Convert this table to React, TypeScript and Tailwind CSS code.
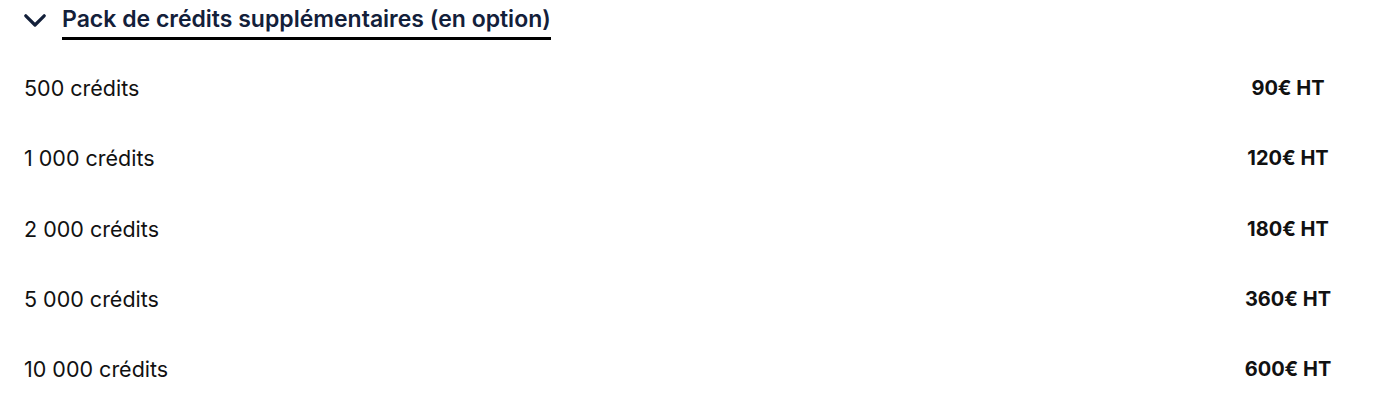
const packs = [
  { credits: "500 crédits", price: "90€ HT" },
  { credits: "1 000 crédits", price: "120€ HT" },
  { credits: "2 000 crédits", price: "180€ HT" },
  { credits: "5 000 crédits", price: "360€ HT" },
  { credits: "10 000 crédits", price: "600€ HT" },
];

export default function App() {
  return (
    <div className="h-[405px] w-[1380px] bg-white font-['Inter',sans-serif] text-[#111111]">
      <div className="flex h-[53px] items-start gap-4 pl-6 pt-[3px]">
        <svg width="22" height="13" viewBox="0 0 22 13" className="mt-[11px] text-[#13203a]">
          <path d="M1.8 1.8l9.2 9.2 9.2-9.2" fill="none" stroke="currentColor" strokeWidth="3.2" strokeLinecap="round" strokeLinejoin="round" />
        </svg>
        <h2 className="border-b-[3px] border-black pb-[2px] text-[23px] font-semibold leading-[32px] text-[#13203a]">
          Pack de crédits supplémentaires (en option)
        </h2>
      </div>
      <div className="flex flex-col">
        {packs.map((p) => (
          <div key={p.credits} className="flex h-[70.25px] items-center pl-6">
            <span className="flex-1 text-[21.5px]">{p.credits}</span>
            <span className="box-content w-[136px] pr-6 text-center text-[20px] font-bold">{p.price}</span>
          </div>
        ))}
      </div>
    </div>
  );
}
